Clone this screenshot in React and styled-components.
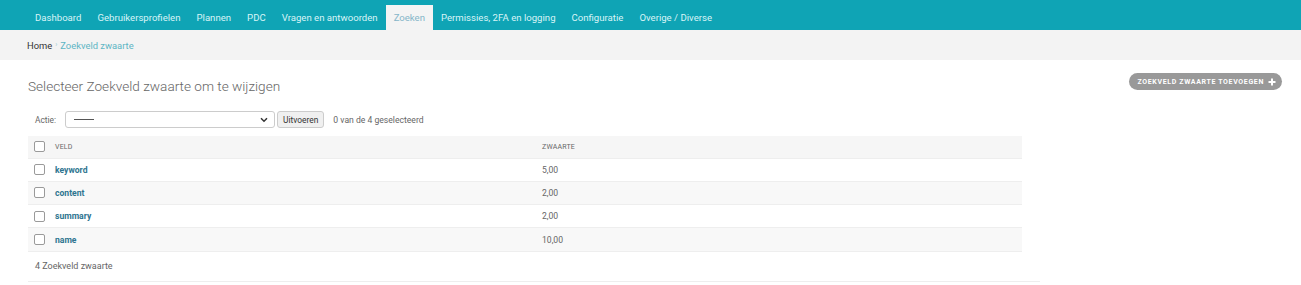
import React from 'react';
import styled, { createGlobalStyle } from 'styled-components';

const GlobalStyle = createGlobalStyle`
  body {
    margin: 0;
    background: #fff;
    font-family: Roboto, "Liberation Sans", sans-serif;
    color: #333;
  }
`

const NavBar = styled.div`
  height: 30px;
  background: #0fa4b5;
  display: flex;
  align-items: flex-end;
  padding-left: 27px;
`

const NavItem = styled.div`
  height: 25px;
  padding: 0 8px 1px;
  display: flex;
  align-items: center;
  font-size: 9.6px;
  color: ${p => (p.active ? '#86b6c9' : '#d8f4f7')};
  background: ${p => (p.active ? '#f4f4f4' : 'transparent')};
  box-sizing: border-box;
`

const Breadcrumbs = styled.div`
  height: 30px;
  background: #f3f3f3;
  display: flex;
  align-items: center;
  padding-left: 27px;
  font-size: 9.4px;
  color: #333;
  gap: 3px;
`

const Crumb = styled.span`
  color: ${p => (p.link ? '#5db5c4' : '#333')};
`

const Sep = styled.span`
  color: #9acdd5;
  font-size: 7px;
`

const Content = styled.div`
  padding: 0 19px 0 28px;
`

const TitleRow = styled.div`
  display: flex;
  justify-content: space-between;
  align-items: flex-start;
  padding-top: 13px;
  height: 42px;
  box-sizing: border-box;
`

const Title = styled.h1`
  margin: 0;
  font-size: 13.6px;
  font-weight: 300;
  color: #666;
  line-height: 26px;
`

const AddButton = styled.div`
  height: 17px;
  padding: 0 6px 0 8px;
  border-radius: 9px;
  background: #999;
  color: #fff;
  font-size: 7px;
  font-weight: 700;
  letter-spacing: 0.65px;
  display: flex;
  align-items: center;
  gap: 4px;
`

const ActionBar = styled.div`
  display: flex;
  align-items: center;
  padding: 9px 0 8px 7px;
  font-size: 8.4px;
  color: #666;
`

const Label = styled.span`
  margin-right: 9px;
`

const FakeSelect = styled.div`
  width: 210px;
  height: 17px;
  box-sizing: border-box;
  border: 1px solid #ccc;
  border-radius: 3px;
  display: flex;
  align-items: center;
  justify-content: space-between;
  padding: 0 6px 0 8px;
  color: #333;
`

const Dashes = styled.span`
  display: inline-block;
  width: 20px;
  border-top: 1px solid #555;
`

const GoButton = styled.div`
  margin-left: 2px;
  height: 17px;
  box-sizing: border-box;
  padding: 0 5px;
  border: 1px solid #ccc;
  border-radius: 3px;
  background: #f0f0f0;
  color: #333;
  display: flex;
  align-items: center;
`

const Counter = styled.span`
  margin-left: 9px;
  font-size: 8.6px;
`

const Results = styled.div`
  width: 1012px;
`

const Table = styled.table`
  width: 994px;
  border-collapse: collapse;
  font-size: 8.6px;
`

const HeadCell = styled.th`
  background: #f6f6f6;
  height: 22px;
  padding: 0 8px;
  text-align: left;
  font-size: 7px;
  font-weight: 400;
  color: #666;
  text-transform: uppercase;
  letter-spacing: 0.2px;
  border-bottom: 1px solid #eee;
  width: ${p => p.w || 'auto'};
  box-sizing: border-box;
`

const Row = styled.tr`
  background: ${p => (p.odd ? '#f8f8f8' : '#fff')};
  border-bottom: 1px solid #eee;
`

const Cell = styled.td`
  height: 23.3px;
  padding: 0 8px;
  color: #666;
  box-sizing: border-box;
`

const FieldLink = styled.a`
  color: #2e7590;
  font-weight: 700;
  text-decoration: none;
`

const Box = styled.span`
  display: block;
  width: 9px;
  height: 9px;
  border: 1px solid #9a9a9a;
  border-radius: 2px;
  background: #fff;
`

const Paginator = styled.div`
  height: 29px;
  padding-left: 7px;
  display: flex;
  align-items: center;
  font-size: 9px;
  color: #666;
  border-bottom: 1px solid #eee;
`

const navItems = [
  'Dashboard',
  'Gebruikersprofielen',
  'Plannen',
  'PDC',
  'Vragen en antwoorden',
  'Zoeken',
  'Permissies, 2FA en logging',
  'Configuratie',
  'Overige / Diverse',
]

const rows = [
  { veld: 'keyword', zwaarte: '5,00' },
  { veld: 'content', zwaarte: '2,00' },
  { veld: 'summary', zwaarte: '2,00' },
  { veld: 'name', zwaarte: '10,00' },
]

export default function App() {
  return (
    <div>
      <GlobalStyle />
      <NavBar>
        {navItems.map(item => (
          <NavItem key={item} active={item === 'Zoeken'}>{item}</NavItem>
        ))}
      </NavBar>
      <Breadcrumbs>
        <Crumb>Home</Crumb>
        <Sep>›</Sep>
        <Crumb link>Zoekveld zwaarte</Crumb>
      </Breadcrumbs>
      <Content>
        <TitleRow>
          <Title>Selecteer Zoekveld zwaarte om te wijzigen</Title>
          <AddButton>
            ZOEKVELD ZWAARTE TOEVOEGEN
            <svg width="8" height="8" viewBox="0 0 8 8">
              <path d="M4 0.5v7M0.5 4h7" stroke="#fff" strokeWidth="2" />
            </svg>
          </AddButton>
        </TitleRow>
        <ActionBar>
          <Label>Actie:</Label>
          <FakeSelect>
            <Dashes />
            <svg width="8" height="6" viewBox="0 0 8 6">
              <path d="M1 1.2l3 3 3-3" stroke="#333" strokeWidth="1.5" fill="none" />
            </svg>
          </FakeSelect>
          <GoButton>Uitvoeren</GoButton>
          <Counter>0 van de 4 geselecteerd</Counter>
        </ActionBar>
        <Results>
          <Table>
            <thead>
              <tr>
                <HeadCell w="19px" style={{ paddingLeft: 6, paddingRight: 0 }}><Box /></HeadCell>
                <HeadCell w="487px">Veld</HeadCell>
                <HeadCell>Zwaarte</HeadCell>
              </tr>
            </thead>
            <tbody>
              {rows.map((r, i) => (
                <Row key={r.veld} odd={i % 2 === 1}>
                  <Cell style={{ paddingLeft: 6, paddingRight: 0 }}><Box /></Cell>
                  <Cell><FieldLink href="#">{r.veld}</FieldLink></Cell>
                  <Cell>{r.zwaarte}</Cell>
                </Row>
              ))}
            </tbody>
          </Table>
          <Paginator>4 Zoekveld zwaarte</Paginator>
        </Results>
      </Content>
    </div>
  );
}
